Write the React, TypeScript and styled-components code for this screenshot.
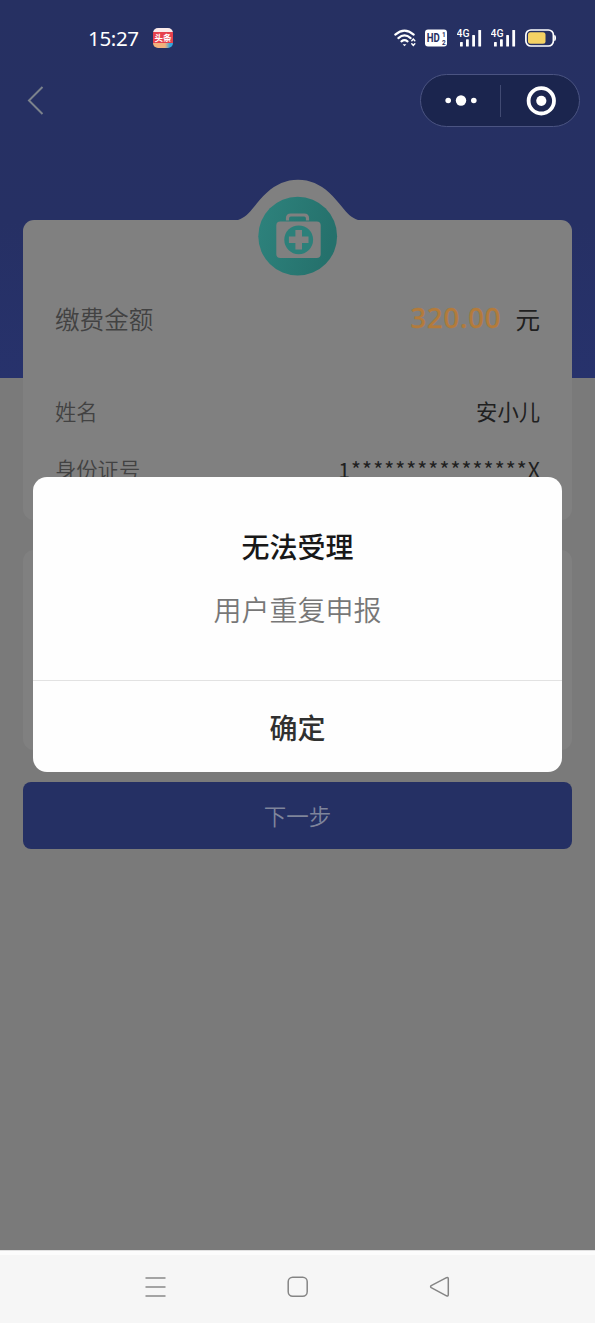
import React from "react";
import styled, { createGlobalStyle } from "styled-components";

const GlobalStyle = createGlobalStyle`
  * { box-sizing: border-box; }
  body { margin: 0; font-family: "Noto Sans CJK SC", "Noto Sans", sans-serif; }
  svg { display: block; }
`;

const Screen = styled.div`
  position: relative;
  display: flex;
  flex-direction: column;
  height: 1323px;
  overflow: hidden;
  background: linear-gradient(#263062 0, #263064 220px, #27326c 378px, #7a7a7a 378px);
`;

const StatusBar = styled.header`
  display: flex;
  align-items: center;
  justify-content: space-between;
  height: 74px;
  padding: 2px 38px 0 88px;
`;

const StatusGroup = styled.div<{ $gap: number }>`
  display: flex;
  align-items: center;
  gap: ${(p) => p.$gap}px;
`;

const Clock = styled.span`
  width: 51px;
  color: #fff;
  font: 400 20.5px/28px "Noto Sans", sans-serif;
  letter-spacing: -0.35px;
  white-space: nowrap;
`;

const NewsBadge = styled.span`
  display: flex;
  flex-direction: column;
  justify-content: center;
  width: 20px;
  height: 20px;
  margin-left: 14px;
  padding-bottom: 1px;
  border-radius: 5px;
  overflow: hidden;
  color: #fff;
  font-size: 8.5px;
  font-weight: 700;
  line-height: 11px;
  text-align: center;
  white-space: nowrap;
  background: linear-gradient(#fbeaea 0 4px, #e6414d 4px 15px, transparent 15px),
    linear-gradient(90deg, #f3b17c 0 60%, #35a6dc 85%);
`;

const NavBar = styled.nav`
  display: flex;
  align-items: center;
  justify-content: space-between;
  height: 53px;
  padding: 0 15px 0 27px;
`;

const Capsule = styled.div`
  display: flex;
  align-items: center;
  width: 160px;
  height: 53px;
  border: 1px solid #4b5482;
  border-radius: 27px;
  background: #1b254e;
`;

const CapsuleAction = styled.div`
  display: flex;
  flex: 0 0 79px;
  justify-content: center;
  height: 32px;
  align-items: center;
  & + & {
    padding-left: 2px;
    border-left: 1px solid #414a72;
  }
`;

const Crest = styled.div`
  display: flex;
  justify-content: center;
  height: 41px;
  margin-top: 52px;
  z-index: 1;
  svg { flex: none; }
`;

const Card = styled.section<{ $height: number }>`
  flex: none;
  height: ${(p) => p.$height}px;
  margin: 0 23px;
  padding: 39px 32px 0;
  border-radius: 11px;
  background: #808080;
  & + & { margin-top: 30px; }
`;

const Row = styled.div<{ $height: number }>`
  display: flex;
  align-items: center;
  justify-content: space-between;
  height: ${(p) => p.$height}px;
`;

const Label = styled.span<{ $size: number }>`
  color: #424242;
  font-size: ${(p) => p.$size}px;
  font-weight: 350;
`;

const Value = styled.span<{ $size: number; $spacing?: number }>`
  margin-right: -${(p) => p.$spacing ?? 0}px;
  color: #202020;
  font-size: ${(p) => p.$size}px;
  letter-spacing: ${(p) => p.$spacing ?? 0}px;
`;

const Amount = styled.span`
  display: flex;
  align-items: center;
  gap: 14px;
`;

const AmountNumber = styled.span`
  color: #b37b3b;
  font: 500 27.5px/36px "Noto Sans", sans-serif;
  letter-spacing: 0.8px;
  -webkit-text-stroke: 0.3px #b37b3b;
`;

const NextButton = styled.button`
  flex: none;
  height: 67px;
  margin: 32px 23px 0;
  padding: 0 0 1px;
  border: 0;
  border-radius: 8px;
  background: #253064;
  color: #7f859b;
  font: 350 22.5px/30px "Noto Sans CJK SC", sans-serif;
`;

const SystemNav = styled.footer`
  display: flex;
  align-items: center;
  justify-content: space-between;
  height: 73px;
  margin-top: auto;
  padding: 0 144px;
  border-top: 1px solid #e2e2e2;
  background: linear-gradient(#fcfcfc 0 4px, #f6f6f6 4px);
`;

const Dialog = styled.div`
  position: absolute;
  top: 477px;
  left: 33px;
  right: 33px;
  display: flex;
  flex-direction: column;
  height: 295px;
  border-radius: 14px;
  overflow: hidden;
  background: #fefefe;
  text-align: center;
`;

const DialogBody = styled.div`
  height: 204px;
  padding-top: 49px;
  border-bottom: 1px solid #e2e2e2;
`;

const DialogTitle = styled.h2`
  margin: 0;
  color: #181818;
  font-size: 28px;
  font-weight: 500;
  line-height: 40px;
`;

const DialogMessage = styled.p`
  margin: 23px 0 0;
  color: #777;
  font-size: 28px;
  font-weight: 350;
  line-height: 40px;
`;

const DialogAction = styled.button`
  flex: 1;
  padding: 0;
  border: 0;
  background: transparent;
  color: #303030;
  font: 500 28px/40px "Noto Sans CJK SC", sans-serif;
`;

const SignalIcon = () => (
  <svg width="26" height="20" viewBox="0 0 26 20" fill="#fff">
    <text x="-0.5" y="9.4" fontFamily="Roboto, sans-serif" fontSize="11" fontWeight="500" textLength="13" lengthAdjust="spacingAndGlyphs">4G</text>
    <rect x="3" y="14" width="2.8" height="4.5" rx=".6" />
    <rect x="9" y="11.3" width="2.8" height="7.2" rx=".6" />
    <rect x="15.2" y="7" width="2.8" height="11.5" rx=".6" />
    <rect x="21.3" y="2" width="2.8" height="16.5" rx=".6" />
  </svg>
);

const WifiIcon = () => (
  <svg width="23" height="20" viewBox="0 0 23 20" fill="none" stroke="#fff" strokeWidth="2.2" strokeLinecap="round">
    <path d="M1.3 6.6Q10.5-1.3 19.7 6.6M4.4 10.1Q10.5 4.8 16.6 10.1M7.5 13.4Q10.5 11 13.5 13.4" />
    <path d="M8.6 16.2h3.8l-1.9 2Z" fill="#fff" stroke="none" />
    <path d="M17.8 12.7l1.5-1.6 1.5 1.6M17.8 15.7l1.5 1.6 1.5-1.6" strokeWidth="1.5" />
  </svg>
);

const HdIcon = () => (
  <svg width="24" height="18" viewBox="0 0 24 18">
    <rect width="22" height="17" y=".5" rx="3" fill="#fff" />
    <g fill="#263062" fontFamily="Roboto, sans-serif" fontWeight="700">
      <text x="1.8" y="13.4" fontSize="12.5" textLength="13" lengthAdjust="spacingAndGlyphs">HD</text>
      <text x="17" y="7.8" fontSize="6.4">1</text>
      <text x="17" y="15.8" fontSize="6.4">2</text>
    </g>
  </svg>
);

const BatteryIcon = () => (
  <svg width="32" height="18" viewBox="0 0 32 18">
    <rect x=".9" y="1" width="27.5" height="16" rx="5" fill="none" stroke="#fff" strokeWidth="1.7" />
    <rect x="3" y="3.3" width="17.5" height="11.4" rx="2.5" fill="#f5d264" />
    <path d="M29.8 6.4q1.8 2.6 0 5.2Z" fill="#fff" stroke="#fff" />
  </svg>
);

/* Bump on the card's top edge with the medical kit emblem */
const CrestIcon = () => (
  <svg width="120" height="100" viewBox="0 0 120 100">
    <defs>
      <linearGradient id="teal" x1="0" y1="0" x2="1" y2="0.25">
        <stop offset="0" stopColor="#2e837d" />
        <stop offset="1" stopColor="#25716c" />
      </linearGradient>
    </defs>
    <path d="M0 42V41C7 38.5 11 34 15.5 28.5C20 23 24 18 29 13.5C38 5.5 48 .8 60 .8S82 5.5 91 13.5C96 18 100 23 104.500 28.5C109 34 113 38.5 120 41V42Z" fill="#808080" />
    <circle cx="59.7" cy="57.2" r="39.4" fill="url(#teal)" />
    <path d="M49.5 41.5v-2.2q0-3.3 3.3-3.3h13.4q3.3 0 3.3 3.3v2.2" fill="none" stroke="#808080" strokeWidth="3.2" />
    <rect x="38.3" y="42.5" width="44.4" height="36.5" rx="4" fill="#808080" />
    <circle cx="60.7" cy="60.8" r="14.4" fill="#2c807a" />
    <path d="M60.7 51v19.6M50.9 60.8h19.6" stroke="#808080" strokeWidth="6.6" />
  </svg>
);

export default function App() {
  return (
    <>
      <GlobalStyle />
      <Screen>
        <StatusBar>
          <StatusGroup $gap={0}>
            <Clock>15:27</Clock>
            <NewsBadge>头条</NewsBadge>
          </StatusGroup>
          <StatusGroup $gap={8}>
            <WifiIcon />
            <HdIcon />
            <SignalIcon />
            <SignalIcon />
            <BatteryIcon />
          </StatusGroup>
        </StatusBar>
        <NavBar>
          <svg width="18" height="30" viewBox="0 0 18 30" fill="none" stroke="#7b828c" strokeWidth="2">
            <path d="M15.5 1 2 14.5l13.5 13.5" />
          </svg>
          <Capsule>
            <CapsuleAction>
              <svg width="34" height="12" viewBox="0 0 34 12" fill="#fff">
                <circle cx="4.2" cy="5.5" r="2.8" />
                <circle cx="17" cy="5.5" r="5.2" />
                <circle cx="29.8" cy="5.5" r="2.8" />
              </svg>
            </CapsuleAction>
            <CapsuleAction>
              <svg width="30" height="30" viewBox="0 0 30 30">
                <circle cx="15.3" cy="14.8" r="12.7" fill="none" stroke="#fff" strokeWidth="3.8" />
                <circle cx="15.3" cy="14.8" r="5.1" fill="#fff" />
              </svg>
            </CapsuleAction>
          </Capsule>
        </NavBar>
        <Crest>
          <CrestIcon />
        </Crest>
        <Card $height={300}>
          <Row $height={117}>
            <Label $size={24.6}>缴费金额</Label>
            <Amount>
              <AmountNumber>320.00</AmountNumber>
              <Value $size={24.6}>元</Value>
            </Amount>
          </Row>
          <Row $height={68}>
            <Label $size={21.3}>姓名</Label>
            <Value $size={21.3}>安小儿</Value>
          </Row>
          <Row $height={48}>
            <Label $size={21.3}>身份证号</Label>
            <Value $size={21.3} $spacing={1.1}>1****************X</Value>
          </Row>
        </Card>
        <Card $height={200} />
        <NextButton>下一步</NextButton>
        <SystemNav>
          <svg width="22" height="22" viewBox="0 0 22 22" stroke="#898989" strokeWidth="1.7">
            <path d="M1.5 2h20M1.5 11h20M1.5 20h20" />
          </svg>
          <svg width="22" height="22" viewBox="0 0 22 22" fill="none" stroke="#858585" strokeWidth="1.5">
            <rect x="1.2" y="1.2" width="19" height="19" rx="4.5" />
          </svg>
          <svg width="22" height="22" viewBox="0 0 22 22" fill="none" stroke="#858585" strokeWidth="1.5" strokeLinejoin="round">
            <path d="M2.2 9.7Q1 10.7 2.2 11.7L17.5 19.8Q19.3 20.5 19.3 18.5V3Q19.3 1 17.5 1.7Z" />
          </svg>
        </SystemNav>
        <Dialog role="alertdialog">
          <DialogBody>
            <DialogTitle>无法受理</DialogTitle>
            <DialogMessage>用户重复申报</DialogMessage>
          </DialogBody>
          <DialogAction>确定</DialogAction>
        </Dialog>
      </Screen>
    </>
  );
}
